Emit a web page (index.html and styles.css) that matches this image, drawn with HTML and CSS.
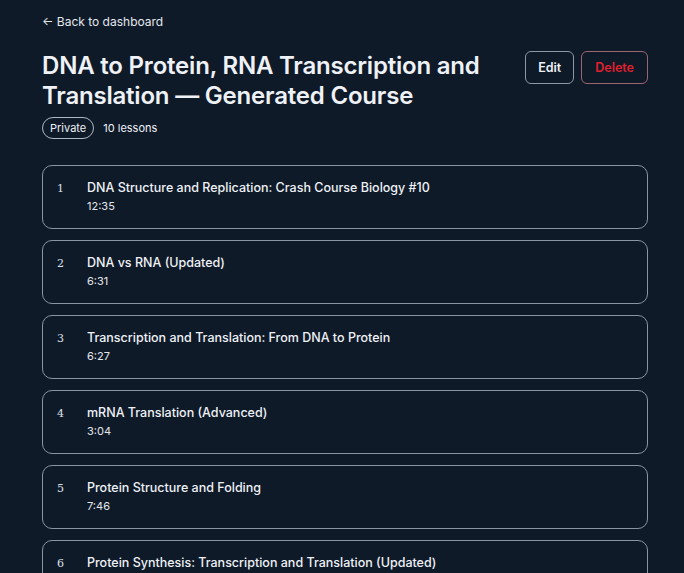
FILE: index.html
```html
<!DOCTYPE html>
<html lang="en">
<head>
    <meta charset="UTF-8">
    <meta name="viewport" content="width=device-width, initial-scale=1.0">
    <link rel="stylesheet" href="styles.css">
    <title>Course</title>
</head>
<body>
    <div class="page">
        <a class="back" href="#">&larr; Back to dashboard</a>

        <div class="head">
            <div class="head-text">
                <h1 class="title">DNA to Protein, RNA Transcription and Translation — Generated Course</h1>
                <div class="meta">
                    <span class="pill">Private</span>
                    <span class="count">10 lessons</span>
                </div>
            </div>
            <div class="actions">
                <button class="btn">Edit</button>
                <button class="btn btn-danger">Delete</button>
            </div>
        </div>

        <ul class="lessons">
            <li class="lesson">
                <span class="num">1</span>
                <div class="info">
                    <div class="lesson-title">DNA Structure and Replication: Crash Course Biology #10</div>
                    <div class="time">12:35</div>
                </div>
            </li>
            <li class="lesson">
                <span class="num">2</span>
                <div class="info">
                    <div class="lesson-title">DNA vs RNA (Updated)</div>
                    <div class="time">6:31</div>
                </div>
            </li>
            <li class="lesson">
                <span class="num">3</span>
                <div class="info">
                    <div class="lesson-title">Transcription and Translation: From DNA to Protein</div>
                    <div class="time">6:27</div>
                </div>
            </li>
            <li class="lesson">
                <span class="num">4</span>
                <div class="info">
                    <div class="lesson-title">mRNA Translation (Advanced)</div>
                    <div class="time">3:04</div>
                </div>
            </li>
            <li class="lesson">
                <span class="num">5</span>
                <div class="info">
                    <div class="lesson-title">Protein Structure and Folding</div>
                    <div class="time">7:46</div>
                </div>
            </li>
            <li class="lesson">
                <span class="num">6</span>
                <div class="info">
                    <div class="lesson-title">Protein Synthesis: Transcription and Translation (Updated)</div>
                    <div class="time">9:12</div>
                </div>
            </li>
        </ul>
    </div>
</body>
</html>
```

FILE: styles.css
```css
body {
    margin: 0;
    background-color: #0f1a29;
    color: #eef1f5;
    font-family: Inter, "Noto Sans", sans-serif;
}

.page {
    padding: 10px 36px 0 42px;
}

.back {
    display: inline-block;
    color: #e3e7ec;
    text-decoration: none;
    font-size: 12px;
    line-height: 18px;
}

/* title row */
.head {
    display: flex;
    justify-content: space-between;
    align-items: flex-start;
    margin-top: 20px;
}

.title {
    margin: 0;
    max-width: 460px;
    font-size: 24px;
    line-height: 30px;
    font-weight: 600;
    letter-spacing: -0.2px;
}

.meta {
    display: flex;
    align-items: center;
    gap: 9px;
    margin-top: 6px;
}

.pill {
    border: 1px solid #aeb7c3;
    border-radius: 11px;
    padding: 3px 7px;
    font-size: 11px;
    line-height: 14px;
}

.count {
    font-size: 11px;
}

.actions {
    display: flex;
    gap: 7px;
    margin-top: 0;
}

.btn {
    height: 33px;
    padding: 0 12px;
    background: transparent;
    color: #eef1f5;
    border: 1px solid #8d97a5;
    border-radius: 6px;
    font-family: inherit;
    font-size: 12.5px;
    font-weight: 600;
}

.btn-danger {
    color: #e0202d;
    border-color: #9c6670;
    padding: 0 13px;
}

/* lesson list */
.lessons {
    list-style: none;
    margin: 26px 0 0 0;
    padding: 0;
    display: flex;
    flex-direction: column;
    gap: 11px;
}

.lesson {
    display: flex;
    align-items: flex-start;
    border: 1px solid #8a94a3;
    border-radius: 10px;
    padding: 13px 15px 13px 14px;
}

.num {
    width: 30px;
    flex-shrink: 0;
    font-family: "DejaVu Serif", serif;
    font-size: 11px;
    line-height: 20px;
    color: #dde2e8;
}

.lesson-title {
    font-size: 12.5px;
    line-height: 18px;
    font-weight: 500;
}

.time {
    font-size: 11px;
    line-height: 18px;
    color: #e3e7ec;
}
```
